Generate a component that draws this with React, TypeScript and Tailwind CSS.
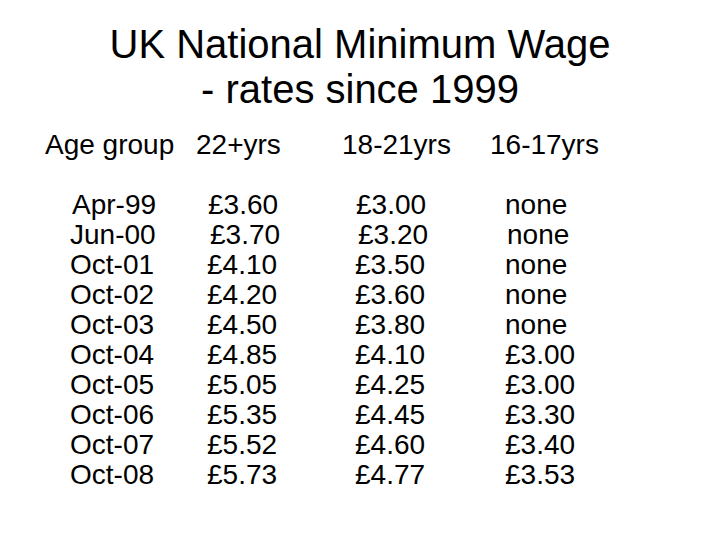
import React from 'react';

const rows = [
  { date: 'Apr-99', adult: '£3.60', dev: '£3.00', young: 'none', nudge: [2, 1, 1, 0] },
  { date: 'Jun-00', adult: '£3.70', dev: '£3.20', young: 'none', nudge: [0, 3, 3, 2] },
  { date: 'Oct-01', adult: '£4.10', dev: '£3.50', young: 'none' },
  { date: 'Oct-02', adult: '£4.20', dev: '£3.60', young: 'none' },
  { date: 'Oct-03', adult: '£4.50', dev: '£3.80', young: 'none' },
  { date: 'Oct-04', adult: '£4.85', dev: '£4.10', young: '£3.00' },
  { date: 'Oct-05', adult: '£5.05', dev: '£4.25', young: '£3.00' },
  { date: 'Oct-06', adult: '£5.35', dev: '£4.45', young: '£3.30' },
  { date: 'Oct-07', adult: '£5.52', dev: '£4.60', young: '£3.40' },
  { date: 'Oct-08', adult: '£5.73', dev: '£4.77', young: '£3.53' },
];

export default function App() {
  return (
    <div className="w-[720px] h-[540px] bg-white text-black font-['Liberation_Sans',Arial,sans-serif] overflow-hidden">
      <h1 className="pt-[22px] text-center text-[40px] leading-[45px] font-normal">
        <div>UK National Minimum Wage</div>
        <div>- rates since 1999</div>
      </h1>

      <div className="mt-[18px] flex pl-[45px] text-[28px] leading-[30px]">
        <div className="w-[151px]">Age group</div>
        <div className="w-[146px]">22+yrs</div>
        <div className="w-[148px]">18-21yrs</div>
        <div>16-17yrs</div>
      </div>

      <div className="mt-[30px] flex flex-col text-[28px] leading-[30px]">
        {rows.map((r) => {
          const n = r.nudge ?? [0, 0, 0, 0];
          return (
            <div key={r.date} className="flex pl-[70px]">
              <div className="w-[137px]">
                <span style={{ marginLeft: n[0] }}>{r.date}</span>
              </div>
              <div className="w-[148px]">
                <span style={{ marginLeft: n[1] }}>{r.adult}</span>
              </div>
              <div className="w-[150px]">
                <span style={{ marginLeft: n[2] }}>{r.dev}</span>
              </div>
              <div>
                <span style={{ marginLeft: n[3] }}>{r.young}</span>
              </div>
            </div>
          );
        })}
      </div>
    </div>
  );
}
